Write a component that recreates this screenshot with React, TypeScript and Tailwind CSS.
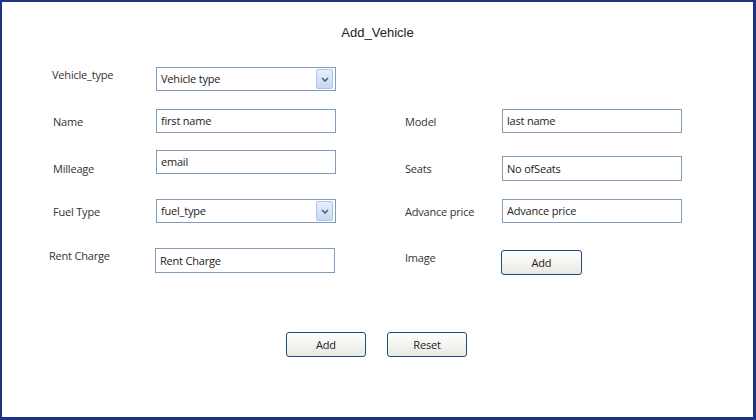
import React from 'react';

function Chevron() {
  return (
    <span className="absolute right-[2px] top-[1px] flex h-[20px] w-[17px] items-center justify-center rounded-[2px] border border-[#b1c4e6] bg-gradient-to-b from-[#e6eefb] to-[#c7d8f3]">
      <svg width="8" height="5" viewBox="0 0 8 5">
        <path d="M1 1 L4 4 L7 1" fill="none" stroke="#4a5f86" strokeWidth="1.6" />
      </svg>
    </span>
  );
}

function TextBox({ value, select, className = '' }: { value: string; select?: boolean; className?: string }) {
  return (
    <div
      className={`relative flex h-[24px] w-[180px] items-center border border-[#7f9db9] bg-white pl-[4px] text-[11px] tracking-[-0.2px] text-[#222] ${className}`}
    >
      {value}
      {select && <Chevron />}
    </div>
  );
}

function Btn({ label, className = '' }: { label: string; className?: string }) {
  return (
    <button
      className={`flex h-[25px] w-[80px] items-center justify-center rounded-[3px] border border-[#1d4a80] bg-gradient-to-b from-white to-[#e9e8e1] text-[11px] text-[#222] ${className}`}
    >
      {label}
    </button>
  );
}

export default function App() {
  return (
    <div
      className="h-[420px] w-[756px] border-b-[3px] border-l-2 border-r-[3px] border-t-2 border-[#1f3485] bg-white text-[#333]"
      style={{ fontFamily: '"Open Sans", "Noto Sans", sans-serif' }}
    >
      {/* Title */}
      <div
        className="pt-[23px] text-center text-[13px] leading-[16px] text-[#222]"
        style={{ fontFamily: '"Liberation Sans", Arial, sans-serif' }}
      >
        Add_Vehicle
      </div>

      <div className="text-[11px] leading-[16px] tracking-[-0.2px]">
        {/* Vehicle type */}
        <div className="mt-[26px] flex h-[24px]">
          <div className="ml-[50px] w-[104px]">Vehicle_type</div>
          <TextBox value="Vehicle type" select />
        </div>

        {/* Name / Model */}
        <div className="mt-[18px] flex h-[24px]">
          <div className="ml-[51px] mt-[5px] w-[103px]">Name</div>
          <TextBox value="first name" />
          <div className="ml-[69px] mt-[5px] w-[97px]">Model</div>
          <TextBox value="last name" />
        </div>

        {/* Milleage / Seats */}
        <div className="mt-[17px] flex h-[31px] items-start">
          <div className="ml-[51px] mt-[11px] w-[103px]">Milleage</div>
          <TextBox value="email" />
          <div className="ml-[69px] mt-[11px] w-[97px]">Seats</div>
          <TextBox value="No ofSeats" className="mt-[6px] h-[25px]" />
        </div>

        {/* Fuel type / Advance price */}
        <div className="mt-[18px] flex h-[24px]">
          <div className="ml-[51px] mt-[5px] w-[103px]">Fuel Type</div>
          <TextBox value="fuel_type" select />
          <div className="ml-[69px] mt-[5px] w-[97px]">Advance price</div>
          <TextBox value="Advance price" />
        </div>

        {/* Rent charge / Image */}
        <div className="mt-[25px] flex h-[26px] items-start">
          <div className="ml-[47px] w-[106px]">Rent Charge</div>
          <TextBox value="Rent Charge" className="h-[25px]" />
          <div className="ml-[70px] mt-[2px] w-[96px]">Image</div>
          <Btn label="Add" className="mt-[2px] w-[81px]" />
        </div>

        {/* Actions */}
        <div className="mt-[58px] flex">
          <Btn label="Add" className="ml-[284px]" />
          <Btn label="Reset" className="ml-[21px]" />
        </div>
      </div>
    </div>
  );
}
